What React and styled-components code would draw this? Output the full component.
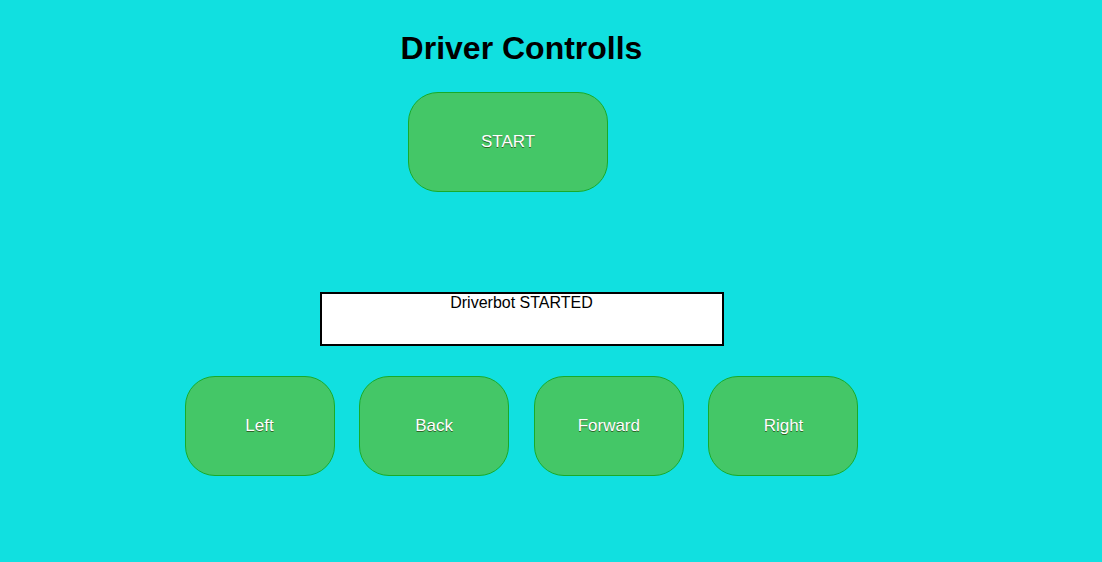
import React from "react";
import styled, { createGlobalStyle } from "styled-components";

const Global = createGlobalStyle`
  html, body {
    margin: 0;
    padding: 0;
    background: #11e0e0;
    font-family: "Liberation Sans", Arial, sans-serif;
  }
`;

const Page = styled.div`
  width: 1043px;
  height: 562px;
  display: flex;
  flex-direction: column;
  align-items: center;
`;

const Title = styled.h1`
  margin: 30px 0 0;
  font-size: 32px;
  line-height: 37px;
  font-weight: bold;
  color: #000;
`;

const GreenButton = styled.button`
  width: ${(p) => p.$w}px;
  height: 100px;
  box-sizing: border-box;
  background-color: #44c767;
  border: 1px solid #18ab29;
  border-radius: 30px;
  color: #fff;
  font-family: "Liberation Sans", Arial, sans-serif;
  font-size: 17px;
  text-shadow: 0px 1px 0px #2f6627;
  cursor: pointer;
  padding: 0;
`;

const StartButton = styled(GreenButton)`
  margin: 25px 27px 0 0;
`;

const Status = styled.div`
  margin-top: 100px;
  width: 404px;
  height: 54px;
  box-sizing: border-box;
  border: 2px solid #000;
  background: #fff;
  text-align: center;
  font-size: 16px;
  line-height: 18px;
  color: #000;
`;

const Row = styled.div`
  margin-top: 30px;
  display: flex;
  gap: 24.67px;
`;

export default function App() {
  return (
    <>
      <Global />
      <Page>
        <Title>Driver Controlls</Title>
        <StartButton $w={200}>START</StartButton>
        <Status>Driverbot STARTED</Status>
        <Row>
          <GreenButton $w={150}>Left</GreenButton>
          <GreenButton $w={150}>Back</GreenButton>
          <GreenButton $w={150}>Forward</GreenButton>
          <GreenButton $w={150}>Right</GreenButton>
        </Row>
      </Page>
    </>
  );
}
